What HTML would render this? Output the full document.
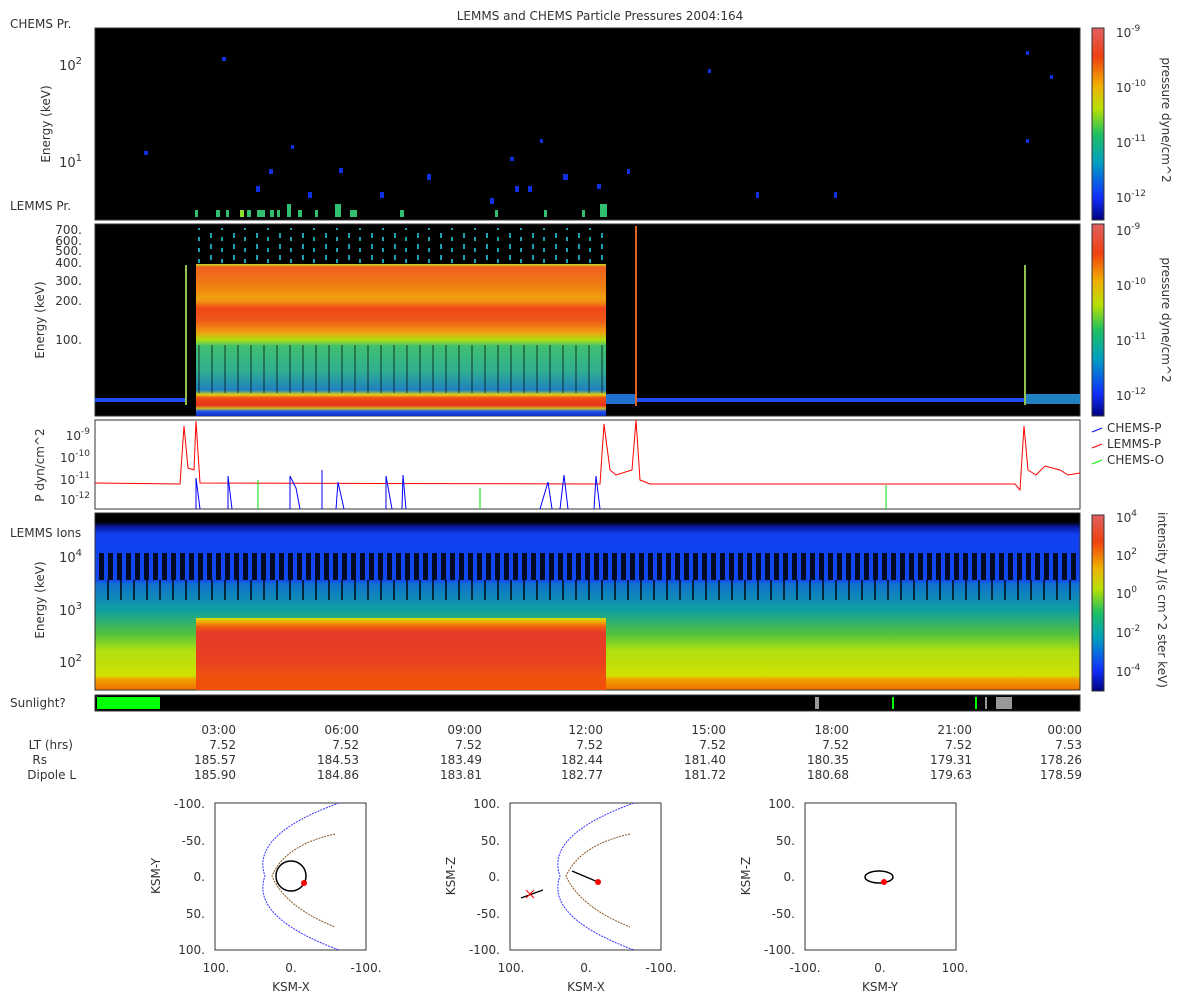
<!DOCTYPE html><html><head><style>body{margin:0;background:#fff}svg text{font-family:"DejaVu Sans","Liberation Sans",sans-serif;fill:#333}</style></head><body>
<svg width="1200" height="1000" viewBox="0 0 1200 1000" xmlns="http://www.w3.org/2000/svg">
<defs>
<linearGradient id="cb" x1="0" y1="1" x2="0" y2="0">
<stop offset="0" stop-color="#000080"/><stop offset=".12" stop-color="#1030ff"/><stop offset=".3" stop-color="#00a0c0"/><stop offset=".45" stop-color="#20c060"/><stop offset=".58" stop-color="#b8e000"/><stop offset=".7" stop-color="#f0b000"/><stop offset=".85" stop-color="#f04010"/><stop offset="1" stop-color="#e06060"/></linearGradient>
<linearGradient id="lp" gradientUnits="userSpaceOnUse" x1="0" y1="264" x2="0" y2="416">
<stop offset="0" stop-color="#c0e020"/><stop offset=".02" stop-color="#f06020"/><stop offset=".15" stop-color="#f08010"/><stop offset=".22" stop-color="#f0a010"/><stop offset=".25" stop-color="#f09010"/><stop offset=".29" stop-color="#f04818"/><stop offset=".37" stop-color="#f05818"/><stop offset=".45" stop-color="#f0a010"/><stop offset=".5" stop-color="#b0e010"/><stop offset=".54" stop-color="#40c070"/><stop offset=".7" stop-color="#30b090"/><stop offset=".83" stop-color="#2080c0"/><stop offset=".86" stop-color="#e0d010"/><stop offset=".88" stop-color="#f05010"/><stop offset=".93" stop-color="#e83020"/><stop offset=".95" stop-color="#d0c020"/><stop offset=".97" stop-color="#2050f0"/><stop offset="1" stop-color="#1030c0"/></linearGradient>
<linearGradient id="li" gradientUnits="userSpaceOnUse" x1="0" y1="513" x2="0" y2="690">
<stop offset="0" stop-color="#000"/><stop offset=".05" stop-color="#000"/><stop offset=".08" stop-color="#0818a0"/><stop offset=".12" stop-color="#1040f0"/><stop offset=".38" stop-color="#1048f0"/><stop offset=".4" stop-color="#1070d0"/><stop offset=".55" stop-color="#10a0a0"/><stop offset=".68" stop-color="#50c040"/><stop offset=".78" stop-color="#b0e010"/><stop offset=".92" stop-color="#d0e000"/><stop offset=".94" stop-color="#f0a000"/><stop offset="1" stop-color="#f07000"/></linearGradient>
<linearGradient id="lr" gradientUnits="userSpaceOnUse" x1="0" y1="618" x2="0" y2="690">
<stop offset="0" stop-color="#d0e010"/><stop offset=".05" stop-color="#f0b000"/><stop offset=".12" stop-color="#f06010"/><stop offset=".2" stop-color="#e83a28"/><stop offset=".6" stop-color="#e84020"/><stop offset=".8" stop-color="#f05010"/><stop offset="1" stop-color="#f05008"/></linearGradient>
<pattern id="st" width="9" height="40" patternUnits="userSpaceOnUse"><rect x="0" y="0" width="5" height="40" fill="#000"/></pattern>
<pattern id="st2" width="13" height="30" patternUnits="userSpaceOnUse"><rect x="3" y="0" width="2" height="30" fill="#000"/></pattern>
<pattern id="dt" width="23" height="11" patternUnits="userSpaceOnUse"><rect x="3" y="2" width="2" height="5" fill="#1aa0b0"/><rect x="14" y="6" width="2" height="4" fill="#1aa0b0"/></pattern>
</defs>
<text x="600" y="20" font-size="12" text-anchor="middle">LEMMS and CHEMS Particle Pressures  2004:164</text>
<text x="10" y="28" font-size="12">CHEMS Pr.</text>
<text x="10" y="210" font-size="12">LEMMS Pr.</text>
<!-- panel1 -->
<rect x="95" y="28" width="985" height="192" fill="#000" stroke="#333"/>
<g fill="#1030e0"><rect x="222" y="57" width="4" height="4"/><rect x="144" y="151" width="4" height="4"/><rect x="269" y="169" width="4" height="5"/><rect x="339" y="168" width="4" height="5"/><rect x="256" y="186" width="4" height="6"/><rect x="308" y="192" width="4" height="6"/><rect x="380" y="192" width="4" height="6"/><rect x="427" y="174" width="4" height="6"/><rect x="490" y="198" width="4" height="6"/><rect x="515" y="186" width="4" height="6"/><rect x="528" y="186" width="4" height="6"/><rect x="563" y="174" width="5" height="6"/><rect x="597" y="184" width="4" height="5"/><rect x="627" y="169" width="3" height="5"/><rect x="756" y="192" width="3" height="6"/><rect x="834" y="192" width="3" height="6"/><rect x="1026" y="51" width="3" height="4"/><rect x="708" y="69" width="3" height="4"/><rect x="1050" y="75" width="3" height="4"/><rect x="510" y="157" width="4" height="4"/><rect x="1026" y="139" width="3" height="4"/><rect x="540" y="139" width="3" height="4"/><rect x="291" y="145" width="3" height="4"/></g>
<g fill="#30c070"><rect x="195" y="210" width="3" height="7"/><rect x="216" y="210" width="4" height="7"/><rect x="226" y="210" width="3" height="7"/><rect x="240" y="210" width="4" height="7" fill="#90e030"/><rect x="247" y="210" width="4" height="7"/><rect x="257" y="210" width="8" height="7"/><rect x="270" y="210" width="4" height="7"/><rect x="277" y="210" width="3" height="7"/><rect x="287" y="204" width="4" height="13"/><rect x="298" y="210" width="4" height="7"/><rect x="315" y="210" width="3" height="7"/><rect x="335" y="204" width="6" height="13"/><rect x="350" y="210" width="7" height="7"/><rect x="400" y="210" width="4" height="7"/><rect x="495" y="210" width="3" height="7"/><rect x="544" y="210" width="3" height="7"/><rect x="582" y="210" width="3" height="7"/><rect x="600" y="204" width="7" height="13"/></g>
<!-- panel2 -->
<rect x="95" y="224" width="985" height="192" fill="#000" stroke="#333"/>
<rect x="95" y="398" width="90" height="4" fill="#2050f0"/>
<rect x="636" y="398" width="444" height="4" fill="#2050f0"/>
<rect x="606" y="394" width="30" height="10" fill="#2070d0"/>
<rect x="1024" y="394" width="56" height="10" fill="#2080c0"/>
<rect x="196" y="228" width="410" height="36" fill="url(#dt)"/>
<rect x="196" y="264" width="410" height="152" fill="url(#lp)"/>
<rect x="196" y="345" width="410" height="48" fill="url(#st2)" opacity=".35"/>
<rect x="185" y="265" width="2" height="140" fill="#90c050"/><rect x="635" y="226" width="2" height="180" fill="#e06020"/><rect x="1024" y="265" width="2" height="140" fill="#90c050"/>
<!-- panel3 -->
<rect x="95" y="420" width="985" height="89" fill="#fff" stroke="#333"/>
<polyline fill="none" stroke="#f00" stroke-width="1" points="95,483 180,484 184,426 188,468 194,470 196,421 196,421 200,483 600,484 604,424 610,470 616,475 632,470 636,420 640,480 650,484 1015,484 1020,490 1024,426 1028,470 1036,475 1045,466 1060,470 1068,475 1080,473"/>
<g stroke="#00f" fill="none"><polyline points="196,509 196,478 200,509"/><polyline points="228,509 228,476 232,509"/><polyline points="290,509 290,476 296,488 300,509"/><polyline points="336,509 338,482 344,509"/><polyline points="386,509 386,476 392,509"/><polyline points="402,509 403,475 406,509"/><polyline points="540,509 548,482 552,509"/><polyline points="560,509 564,475 568,509"/><polyline points="594,509 596,476 600,509"/><line x1="322" y1="509" x2="322" y2="470"/></g>
<g stroke="#0d0"><line x1="258" y1="509" x2="258" y2="480"/><line x1="480" y1="509" x2="480" y2="488"/><line x1="886" y1="509" x2="886" y2="485"/></g>
<text x="44" y="465" font-size="12" transform="rotate(-90 44 465)" text-anchor="middle">P dyn/cm^2</text>
<g font-size="12" text-anchor="end"><text x="90" y="440">10<tspan dy="-6" font-size="9">-9</tspan></text><text x="90" y="462">10<tspan dy="-6" font-size="9">-10</tspan></text><text x="90" y="484">10<tspan dy="-6" font-size="9">-11</tspan></text><text x="90" y="504">10<tspan dy="-6" font-size="9">-12</tspan></text></g>
<g font-size="12"><line x1="1092" y1="432" x2="1102" y2="428" stroke="#00f"/><text x="1107" y="432">CHEMS-P</text><line x1="1092" y1="448" x2="1102" y2="444" stroke="#f00"/><text x="1107" y="448">LEMMS-P</text><line x1="1092" y1="464" x2="1102" y2="460" stroke="#0f0"/><text x="1107" y="464">CHEMS-O</text></g>
<!-- panel4 -->
<rect x="95" y="513" width="985" height="177" fill="url(#li)" stroke="#333"/>
<rect x="96" y="553" width="984" height="27" fill="url(#st)" opacity=".85"/>
<rect x="96" y="580" width="984" height="20" fill="url(#st2)" opacity=".7"/>
<rect x="196" y="618" width="410" height="72" fill="url(#lr)"/>
<text x="10" y="537" font-size="12">LEMMS Ions</text>
<!-- sunlight -->
<rect x="95" y="695" width="985" height="16" fill="#000" stroke="#333"/>
<rect x="97" y="697" width="63" height="12" fill="#00ff00"/>
<g fill="#999"><rect x="815" y="697" width="4" height="12"/><rect x="996" y="697" width="16" height="12"/><rect x="985" y="697" width="2" height="12"/></g>
<g fill="#0f0"><rect x="892" y="697" width="2" height="12"/><rect x="975" y="697" width="2" height="12"/></g>
<text x="10" y="707" font-size="12">Sunlight?</text>
<!-- y labels -->
<g font-size="12" text-anchor="middle"><text transform="translate(50,124) rotate(-90)">Energy (keV)</text><text transform="translate(44,320) rotate(-90)">Energy (keV)</text><text transform="translate(44,600) rotate(-90)">Energy (keV)</text></g>
<g font-size="13" text-anchor="end"><text x="82" y="70">10<tspan dy="-6" font-size="10">2</tspan></text><text x="82" y="167">10<tspan dy="-6" font-size="10">1</tspan></text><text x="82" y="562">10<tspan dy="-6" font-size="10">4</tspan></text><text x="82" y="615">10<tspan dy="-6" font-size="10">3</tspan></text><text x="82" y="667">10<tspan dy="-6" font-size="10">2</tspan></text></g>
<g font-size="12" text-anchor="end"><text x="82" y="234">700.</text><text x="82" y="245">600.</text><text x="82" y="255">500.</text><text x="82" y="267">400.</text><text x="82" y="285">300.</text><text x="82" y="305">200.</text><text x="82" y="344">100.</text></g>
<!-- colorbars -->
<rect x="1092" y="28" width="12" height="192" fill="url(#cb)" stroke="#333"/>
<rect x="1092" y="224" width="12" height="192" fill="url(#cb)" stroke="#333"/>
<rect x="1092" y="515" width="12" height="176" fill="url(#cb)" stroke="#333"/>
<g font-size="12"><text x="1116" y="37">10<tspan dy="-6" font-size="9">-9</tspan></text><text x="1116" y="92">10<tspan dy="-6" font-size="9">-10</tspan></text><text x="1116" y="147">10<tspan dy="-6" font-size="9">-11</tspan></text><text x="1116" y="202">10<tspan dy="-6" font-size="9">-12</tspan></text>
<text x="1116" y="235">10<tspan dy="-6" font-size="9">-9</tspan></text><text x="1116" y="290">10<tspan dy="-6" font-size="9">-10</tspan></text><text x="1116" y="345">10<tspan dy="-6" font-size="9">-11</tspan></text><text x="1116" y="400">10<tspan dy="-6" font-size="9">-12</tspan></text>
<text x="1116" y="522">10<tspan dy="-6" font-size="9">4</tspan></text><text x="1116" y="560">10<tspan dy="-6" font-size="9">2</tspan></text><text x="1116" y="598">10<tspan dy="-6" font-size="9">0</tspan></text><text x="1116" y="637">10<tspan dy="-6" font-size="9">-2</tspan></text><text x="1116" y="676">10<tspan dy="-6" font-size="9">-4</tspan></text>
<text transform="translate(1162,120) rotate(90)" text-anchor="middle">pressure dyne/cm^2</text><text transform="translate(1162,320) rotate(90)" text-anchor="middle">pressure dyne/cm^2</text><text transform="translate(1158,600) rotate(90)" text-anchor="middle">intensity 1/(s cm^2 ster keV)</text></g>
<!-- time axis -->
<g font-size="12" text-anchor="end"><text x="236" y="734">03:00</text><text x="359" y="734">06:00</text><text x="482" y="734">09:00</text><text x="603" y="734">12:00</text><text x="726" y="734">15:00</text><text x="849" y="734">18:00</text><text x="972" y="734">21:00</text><text x="1082" y="734">00:00</text>
<text x="236" y="749">7.52</text><text x="359" y="749">7.52</text><text x="482" y="749">7.52</text><text x="603" y="749">7.52</text><text x="726" y="749">7.52</text><text x="849" y="749">7.52</text><text x="972" y="749">7.52</text><text x="1082" y="749">7.53</text>
<text x="236" y="764">185.57</text><text x="359" y="764">184.53</text><text x="482" y="764">183.49</text><text x="603" y="764">182.44</text><text x="726" y="764">181.40</text><text x="849" y="764">180.35</text><text x="972" y="764">179.31</text><text x="1082" y="764">178.26</text>
<text x="236" y="779">185.90</text><text x="359" y="779">184.86</text><text x="482" y="779">183.81</text><text x="603" y="779">182.77</text><text x="726" y="779">181.72</text><text x="849" y="779">180.68</text><text x="972" y="779">179.63</text><text x="1082" y="779">178.59</text>
<text x="73" y="749">LT (hrs)</text><text x="47" y="764">Rs</text><text x="76" y="779">Dipole L</text></g>
<!-- orbit plots -->
<g font-size="12" fill="none">
<rect x="215" y="803" width="151" height="147" stroke="#333"/>
<rect x="510" y="803" width="151" height="147" stroke="#333"/>
<rect x="805" y="803" width="151" height="147" stroke="#333"/>
<path d="M339,803 Q250,835 265,876 Q250,917 339,950" stroke="#33f" stroke-dasharray="2,1"/>
<path d="M335,834 Q285,845 272,876 Q285,907 335,927" stroke="#852" stroke-dasharray="2,1"/>
<circle cx="291" cy="876" r="15" stroke="#000" stroke-width="1.5"/>
<path d="M634,803 Q545,835 560,876 Q545,917 634,950" stroke="#33f" stroke-dasharray="2,1"/>
<path d="M630,834 Q580,845 566,876 Q580,907 630,927" stroke="#852" stroke-dasharray="2,1"/>
<line x1="572" y1="871" x2="598" y2="882" stroke="#000" stroke-width="1.3"/>
<line x1="521" y1="898" x2="543" y2="890" stroke="#000" stroke-width="1.3"/>
<path d="M526,890l8,8M534,890l-8,8" stroke="#f00"/>
<ellipse cx="879" cy="877" rx="14" ry="6" stroke="#000" stroke-width="1.5"/>
</g>
<g fill="#f00"><circle cx="304" cy="883" r="3"/><circle cx="598" cy="882" r="3"/><circle cx="884" cy="882" r="3"/></g>
<g font-size="12" text-anchor="end"><text x="205" y="808">-100.</text><text x="205" y="845">-50.</text><text x="205" y="881">0.</text><text x="205" y="918">50.</text><text x="205" y="954">100.</text>
<text x="500" y="808">100.</text><text x="500" y="845">50.</text><text x="500" y="881">0.</text><text x="500" y="918">-50.</text><text x="500" y="954">-100.</text>
<text x="795" y="808">100.</text><text x="795" y="845">50.</text><text x="795" y="881">0.</text><text x="795" y="918">-50.</text><text x="795" y="954">-100.</text></g>
<g font-size="12" text-anchor="middle"><text x="216" y="972">100.</text><text x="291" y="972">0.</text><text x="366" y="972">-100.</text><text x="291" y="991">KSM-X</text>
<text x="511" y="972">100.</text><text x="586" y="972">0.</text><text x="661" y="972">-100.</text><text x="586" y="991">KSM-X</text>
<text x="805" y="972">-100.</text><text x="880" y="972">0.</text><text x="955" y="972">100.</text><text x="880" y="991">KSM-Y</text>
<text transform="translate(160,876) rotate(-90)">KSM-Y</text><text transform="translate(455,876) rotate(-90)">KSM-Z</text><text transform="translate(750,876) rotate(-90)">KSM-Z</text></g>
</svg></body></html>
